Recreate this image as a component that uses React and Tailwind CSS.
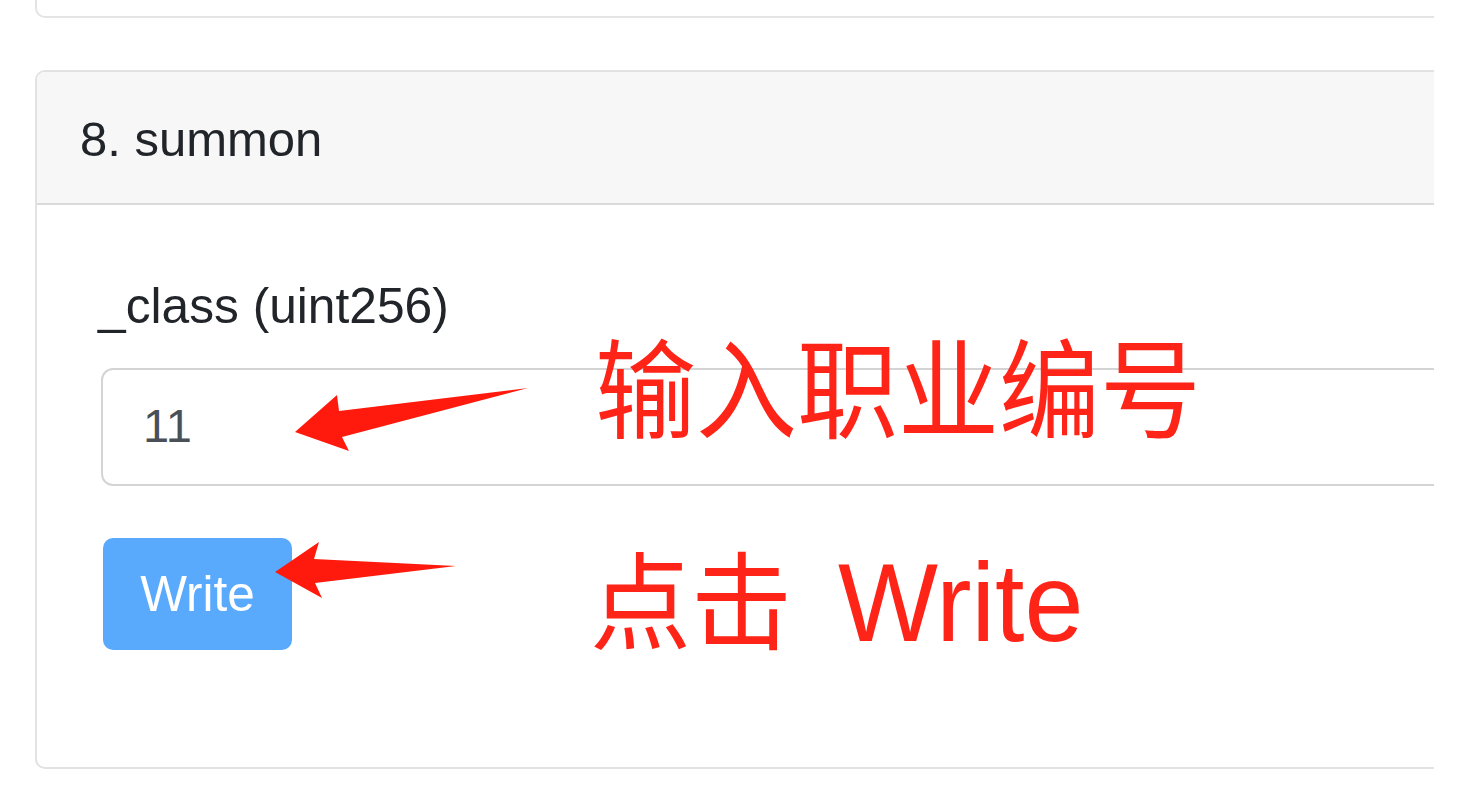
import React from "react";

const sans = { fontFamily: '"Liberation Sans", Arial, "Noto Sans CJK SC", sans-serif' };

const App = () => {
  return (
    <div className="relative h-[808px] w-[1470px] overflow-hidden bg-white" style={sans}>
      {/* page content, cut off on the right like the original capture */}
      <div className="w-[1434px] overflow-hidden pl-[35px]">
        {/* bottom of the previous card */}
        <div className="h-[18px] w-[1460px] rounded-b-[10px] border-2 border-t-0 border-[#e4e4e4]" />

        {/* card 8 */}
        <div className="mt-[52px] w-[1460px] rounded-[10px] border-2 border-[#e2e2e2]">
          <div className="flex h-[133px] items-center rounded-t-[8px] border-b-2 border-[#dadada] bg-[#f7f7f7] px-[43px] pt-[4px] text-[49px] text-[#212529]">
            8. summon
          </div>
          <div className="px-[61px] pb-[117px] pt-[72px]">
            <label className="block text-[49.7px] leading-[1.2] text-[#212529]">
              _class (uint256)
            </label>
            <div className="ml-[3px] mt-[31px] flex h-[118px] w-[1400px] items-center rounded-[12px] border-2 border-[#d4d4d4] bg-white pl-[40px] text-[47px] text-[#495057]">
              11
            </div>
            <button
              type="button"
              className="ml-[5px] mt-[52px] flex h-[112px] w-[189px] items-center justify-center rounded-[10px] bg-[#59a9fd] text-[49.5px] text-white"
            >
              Write
            </button>
          </div>
        </div>
      </div>

      {/* red annotations drawn over the screenshot */}
      <svg className="absolute left-0 top-0" width="1470" height="808" viewBox="0 0 1470 808">
        <polygon
          points="295,432 337,395 339,411 528,388 342,437 349,451"
          fill="#ff1a0d"
        />
        <polygon
          points="275,572 319,542 314,559 456,566 315,583 322,598"
          fill="#ff1a0d"
        />
      </svg>
      <div
        className="absolute left-[595px] top-[329px] origin-top scale-y-[1.07] whitespace-nowrap text-[101px] leading-none text-[#ff2418]"
        style={{ fontFamily: '"Noto Sans CJK SC", sans-serif' }}
      >
        输入职业编号
      </div>
      <div
        className="absolute left-[590px] top-[542px] flex origin-top scale-y-[1.05] items-baseline whitespace-nowrap leading-none text-[#ff2418]"
      >
        <span className="text-[101px]" style={{ fontFamily: '"Noto Sans CJK SC", sans-serif' }}>
          点击
        </span>
        <span className="ml-[46px] text-[106px]" style={{ fontFamily: '"Liberation Sans", Arial, sans-serif' }}>
          Write
        </span>
      </div>
    </div>
  );
};

export default App;
